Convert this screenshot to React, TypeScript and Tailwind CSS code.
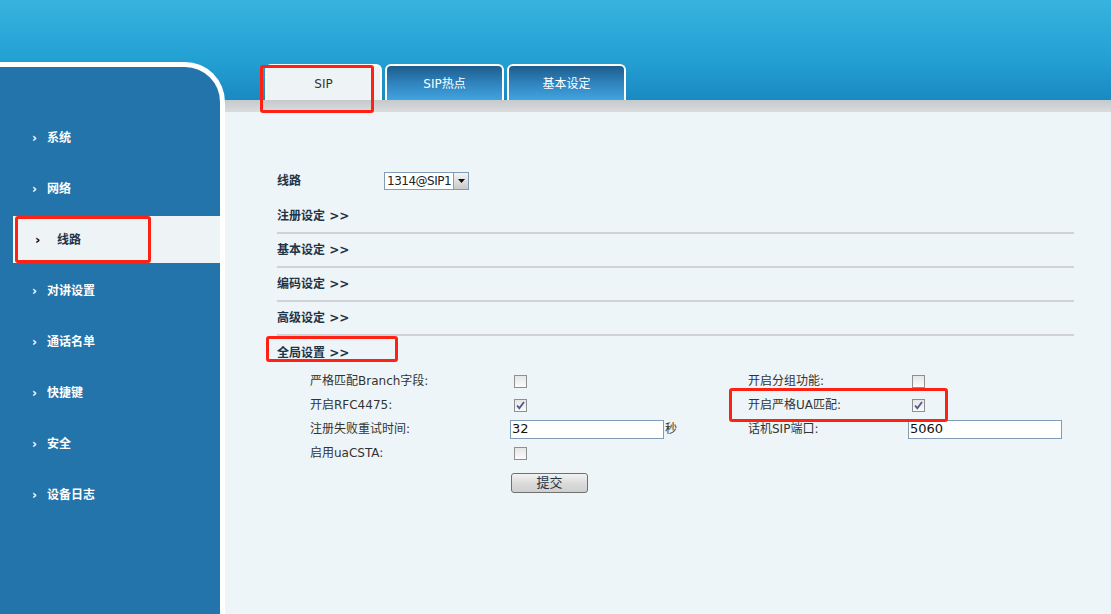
import React from 'react';

const menu = ['系统', '网络', '线路', '对讲设置', '通话名单', '快捷键', '安全', '设备日志'];
const sections = ['注册设定', '基本设定', '编码设定', '高级设定'];

const Check: React.FC<{ on?: boolean }> = ({ on }) => (
  <span className="ml-[4px] w-[13px] h-[13px] border border-[#8e8f8f] bg-[linear-gradient(180deg,#e6e6e6,#fbfbfb)] flex items-center justify-center">
    {on && (
      <svg width="9" height="9" viewBox="0 0 9 9">
        <path d="M1 4.5 L3.3 7.2 L8 1" fill="none" stroke="#4a5c92" strokeWidth="1.8" />
      </svg>
    )}
  </span>
);

const Mark: React.FC<{ className: string }> = ({ className }) => (
  <div className={`absolute border-[3px] border-[#ff2214] rounded-[3px] ${className}`} />
);

export default function App() {
  return (
    <div className="relative w-[1111px] h-[614px] overflow-hidden flex bg-[linear-gradient(180deg,#38b3de_0px,#23a0d3_60px,#1a8ac3_98px)] font-['DejaVu_Sans','Noto_Sans_CJK_SC',sans-serif]">
      {/* sidebar */}
      <div className="w-[225px] shrink-0 pt-[62px] flex flex-col">
        <div className="flex-1 bg-[#2274aa] border-t-[5px] border-r-[5px] border-white rounded-tr-[40px] pt-[45px]">
          {menu.map((m) =>
            m === '线路' ? (
              <div key={m} className="h-[51px] py-[2px]">
                <div className="h-full ml-[13px] bg-[#eef3f6] border-l-2 border-white flex items-center pl-[20px] text-[12px] font-bold text-[#1f3446]">
                  <span className="w-[22px] text-[13px] text-black">›</span>
                  {m}
                </div>
              </div>
            ) : (
              <div key={m} className="h-[51px] flex items-center pl-[32px] text-[12px] font-bold text-white">
                <span className="w-[15px] text-[12px]">›</span>
                {m}
              </div>
            )
          )}
        </div>
      </div>

      {/* main */}
      <div className="flex-1 flex flex-col">
        <div className="h-[100px] flex items-end pl-[40px] gap-[3px]">
          <div className="w-[117px] h-[36px] pt-[2px] border-2 border-b-0 border-white rounded-t-[6px] bg-[#eef3f6] flex items-center justify-center text-[12px] text-[#333]">
            SIP
          </div>
          {['SIP热点', '基本设定'].map((t) => (
            <div
              key={t}
              className="w-[119px] h-[36px] pt-[2px] border-2 border-b-0 border-white rounded-t-[6px] bg-[linear-gradient(180deg,#1e5c8c,#2f83bd_50%,#42a3df)] flex items-center justify-center text-[12px] text-white"
            >
              {t}
            </div>
          ))}
        </div>
        <div className="h-[12px] bg-[linear-gradient(180deg,#c6c9cc,#dadcdd)]" />
        <div className="flex-1 bg-[#eef5f8] pl-[52px] pr-[37px] pt-[57px] text-[12px] text-[#333]">
          <div className="h-[24px] flex items-center">
            <span className="w-[107px] font-bold text-[#1f3446]">线路</span>
            <div className="w-[85px] h-[18px] border border-[#7f9db9] bg-white flex items-center text-[12px] text-[#222]">
              <span className="flex-1 pl-[2px] whitespace-nowrap tracking-[-0.5px]">1314@SIP1</span>
              <span className="w-[15px] h-full bg-[linear-gradient(180deg,#f4f4f4,#c9c9c9)] border-l border-[#999] flex items-center justify-center">
                <svg width="7" height="4" viewBox="0 0 7 4">
                  <path d="M0 0 H7 L3.5 4 Z" fill="#111" />
                </svg>
              </span>
            </div>
          </div>
          <div className="mt-[7px]">
            {sections.map((s) => (
              <div key={s} className="h-[34px] border-b-2 border-[#cfd1d2] flex items-center font-bold text-[#1f3446]">
                {s} &gt;&gt;
              </div>
            ))}
            <div className="h-[33px] flex items-center font-bold text-[#1f3446]">全局设置 &gt;&gt;</div>
          </div>

          <div className="pl-[33px]">
            <div className="h-[24px] flex items-center">
              <span className="w-[200px]">严格匹配Branch字段:</span>
              <span className="w-[238px] flex"><Check /></span>
              <span className="w-[160px]">开启分组功能:</span>
              <Check />
            </div>
            <div className="h-[24px] flex items-center">
              <span className="w-[200px]">开启RFC4475:</span>
              <span className="w-[238px] flex"><Check on /></span>
              <span className="w-[160px]">开启严格UA匹配:</span>
              <Check on />
            </div>
            <div className="h-[24px] flex items-center">
              <span className="w-[200px]">注册失败重试时间:</span>
              <span className="w-[238px] flex items-center">
                <span className="w-[154px] h-[19px] border border-[#7f9db9] bg-white text-[13px] text-[#111] pl-[1px] flex items-center">32</span>
                <span className="ml-[1px]">秒</span>
              </span>
              <span className="w-[160px]">话机SIP端口:</span>
              <span className="w-[154px] h-[19px] border border-[#7f9db9] bg-white text-[13px] text-[#111] pl-[1px] flex items-center">5060</span>
            </div>
            <div className="h-[24px] flex items-center">
              <span className="w-[200px]">启用uaCSTA:</span>
              <Check />
            </div>
            <div className="mt-[8px] pl-[201px]">
              <button className="w-[77px] h-[20px] border border-[#707070] rounded-[3px] bg-[linear-gradient(180deg,#f3f3f3,#dcdcdc_50%,#cfcfcf)] text-[13px] text-[#1f3446] flex items-center justify-center">
                提交
              </button>
            </div>
          </div>
        </div>
      </div>

      <Mark className="left-[260px] top-[65px] w-[114px] h-[48px]" />
      <Mark className="left-[15px] top-[216px] w-[136px] h-[47px]" />
      <Mark className="left-[266px] top-[336px] w-[132px] h-[26px]" />
      <Mark className="left-[729px] top-[388px] w-[219px] h-[34px]" />
    </div>
  );
}
